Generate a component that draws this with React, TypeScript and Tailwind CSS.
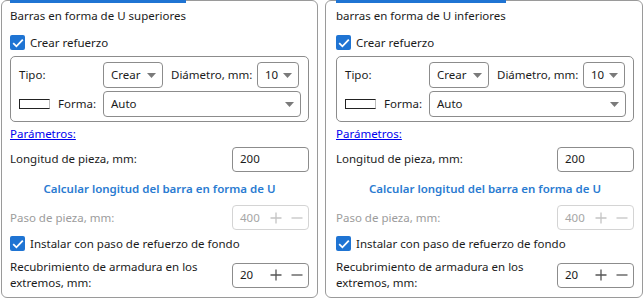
import React from "react";

const FONT = { fontFamily: '"Noto Sans", "Open Sans", sans-serif' };

function Caret() {
  return (
    <svg width="9" height="5" viewBox="0 0 9 5" className="shrink-0">
      <path d="M0 0 L9 0 L4.5 5 Z" fill="#7a7a7a" />
    </svg>
  );
}

function Check() {
  return (
    <div className="w-[15px] h-[15px] bg-[#1f74d3] rounded-[2px] flex items-center justify-center shrink-0">
      <svg width="12" height="10" viewBox="0 0 12 10">
        <path d="M1.2 5.2 L4.4 8.3 L10.8 1.6" stroke="white" strokeWidth="1.8" fill="none" />
      </svg>
    </div>
  );
}

function Select({ value, className }: { value: string; className: string }) {
  return (
    <div
      className={
        "h-[26px] border border-[#8c8c8c] rounded-[4px] flex items-center justify-between pl-[7px] pr-[6px] " +
        className
      }
    >
      <span>{value}</span>
      <Caret />
    </div>
  );
}

function Plus({ color }: { color: string }) {
  return (
    <svg width="12" height="12" viewBox="0 0 12 12">
      <path d="M6 0.5 V11.5 M0.5 6 H11.5" stroke={color} strokeWidth="1.3" />
    </svg>
  );
}
function Minus({ color }: { color: string }) {
  return (
    <svg width="12" height="12" viewBox="0 0 12 12">
      <path d="M0.5 6 H11.5" stroke={color} strokeWidth="1.3" />
    </svg>
  );
}

function Spin({ value, disabled }: { value: string; disabled?: boolean }) {
  const c = disabled ? "#c4c4c4" : "#555555";
  return (
    <div
      className={
        "w-[77px] h-[25px] rounded-[4px] border flex items-center pl-[7px] pr-[5px] shrink-0 " +
        (disabled ? "border-[#d4d4d4] text-[#a6a6a6]" : "border-[#8c8c8c] text-[#1b1b1b]")
      }
    >
      <span className="flex-1">{value}</span>
      <div className="flex items-center gap-[9px]">
        <Plus color={c} />
        <Minus color={c} />
      </div>
    </div>
  );
}

function Panel({ title, box }: { title: string; box: string }) {
  return (
    <div
      className={
        "h-[298px] border border-[#9a9a9a] rounded-[6px] flex flex-col text-[11.5px] text-[#1b1b1b] shrink-0 " + box
      }
    >
      <div className="w-fit -mt-px border-t-[3px] border-[#1f74d3] pt-[4px] h-[27px] leading-[17px]">
        {title}
      </div>
      <div className="flex items-center gap-[5px] h-[29px] pt-[2px]">
        <Check />
        <span>Crear refuerzo</span>
      </div>
      <div className="h-[66px] border border-[#8c8c8c] rounded-[5px] pl-[8px] pr-[7px] pt-[5px] flex flex-col gap-[3px] shrink-0">
        <div className="flex items-center h-[26px]">
          <span className="w-[84px]">Tipo:</span>
          <Select value="Crear" className="w-[60px]" />
          <span className="ml-[8px] w-[86px] whitespace-nowrap">Diámetro, mm:</span>
          <Select value="10" className="w-[42px]" />
        </div>
        <div className="flex items-center h-[26px]">
          <div className="w-[31px] h-[10px] border border-[#222] border-r-[#bdbdbd] mr-[8px]" />
          <span className="w-[45px]">Forma:</span>
          <Select value="Auto" className="flex-1" />
        </div>
      </div>
      <div className="h-[24px] flex items-center shrink-0">
        <span className="text-[#0000ee] underline">Parámetros:</span>
      </div>
      <div className="h-[26px] flex items-center justify-between shrink-0">
        <span>Longitud de pieza, mm:</span>
        <div className="w-[77px] h-[25px] border border-[#8c8c8c] rounded-[4px] flex items-center pl-[7px]">200</div>
      </div>
      <div className="h-[33px] flex items-center justify-center font-semibold text-[#2a7bd1] shrink-0">
        Calcular longitud del barra en forma de U
      </div>
      <div className="h-[25px] flex items-center justify-between text-[#9c9c9c] shrink-0">
        <span>Paso de pieza, mm:</span>
        <Spin value="400" disabled />
      </div>
      <div className="flex items-center gap-[5px] h-[27px] shrink-0">
        <Check />
        <span>Instalar con paso de refuerzo de fondo</span>
      </div>
      <div className="flex items-center justify-between mt-[2px] h-[32px] shrink-0">
        <span className="leading-[16px]">
          Recubrimiento de armadura en los
          <br />
          extremos, mm:
        </span>
        <Spin value="20" />
      </div>
    </div>
  );
}

export default function App() {
  return (
    <div className="w-[643px] h-[299px] bg-white flex gap-[7px] pl-px" style={FONT}>
      <Panel title="Barras en forma de U superiores" box="w-[317px] px-[8px]" />
      <Panel title="barras en forma de U inferiores" box="w-[318px] pl-[10px] pr-[8px]" />
    </div>
  );
}
